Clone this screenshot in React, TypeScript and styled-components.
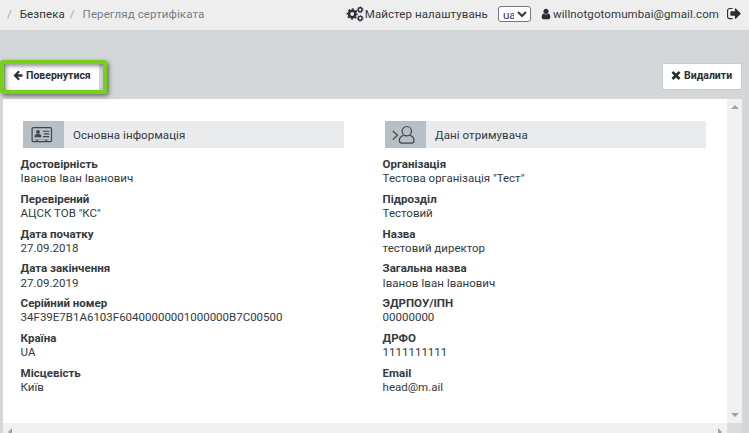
import React from "react";
import styled, { createGlobalStyle } from "styled-components";

const Global = createGlobalStyle`
  * { box-sizing: border-box; }
  body {
    margin: 0;
    overflow: hidden;
    background: #d3d7da;
    color: #343a40;
    font-family: Roboto, "Liberation Sans", sans-serif;
    font-size: 11.5px;
  }
`;

const Page = styled.div`
  width: 749px;
  height: 433px;
  display: flex;
  flex-direction: column;
  overflow: hidden;
`;

const TopBar = styled.header`
  height: 30px;
  flex: none;
  display: flex;
  align-items: center;
  justify-content: space-between;
  padding: 0 8px 3px 7px;
  background: #eee;
  white-space: nowrap;
`;

const Crumbs = styled.nav`
  display: flex;
  align-items: center;
`;

const Slash = styled.span`
  color: #a4abb1;
`;

const Crumb = styled.span<{ $muted?: boolean; $gap: number; $spacing: number }>`
  margin: 0 ${(p) => p.$gap}px 0 8px;
  color: ${(p) => (p.$muted ? "#737f88" : "#2f353a")};
  letter-spacing: ${(p) => p.$spacing}px;
`;

const Tools = styled.div`
  display: flex;
  align-items: center;
`;

const ToolText = styled.span<{ $spacing: number }>`
  margin-left: 1px;
  letter-spacing: ${(p) => p.$spacing}px;
`;

const Language = styled.select`
  width: 33px;
  height: 16px;
  margin: 0 9px 0 10px;
  padding: 0;
  border: 1px solid #767676;
  border-radius: 3px;
  background: #fff;
  color: #343a40;
  font: 11.5px Roboto, sans-serif;
`;

const Glyph = styled.svg<{ $gap?: number }>`
  flex: none;
  display: block;
  margin-left: ${(p) => p.$gap ?? 0}px;
`;

const Actions = styled.div`
  flex: none;
  display: flex;
  justify-content: space-between;
  height: 69px;
  padding: 33px 7px 0 5px;
`;

const ButtonHolder = styled.div`
  position: relative;
`;

const ActionButton = styled.button<{ $width: number; $outline: string }>`
  display: flex;
  align-items: center;
  width: ${(p) => p.$width}px;
  height: 27px;
  padding: 0 0 3px 7px;
  border: 1px solid ${(p) => p.$outline};
  background: #fff;
  color: #2b2f33;
  font: 700 10.5px Roboto, sans-serif;
  white-space: nowrap;
`;

const ActionText = styled.span`
  margin-left: 3px;
`;

const Highlight = styled.div`
  position: absolute;
  left: -5px;
  top: -3px;
  width: 107px;
  height: 34px;
  border: 4px solid #76d01c;
  border-radius: 3px;
  box-shadow: 2px 2px 4px rgba(0, 0, 0, 0.5), inset 2px 2px 4px rgba(0, 0, 0, 0.45);
`;

const Panel = styled.main`
  flex: 1;
  display: grid;
  grid-template-columns: 724px 15px;
  grid-template-rows: 324px 10px;
  margin-left: 3px;
  width: 739px;
`;

const Sheet = styled.section`
  display: flex;
  gap: 41px;
  padding: 22px 0 0 20px;
  background: #fff;
`;

const Track = styled.div<{ $vertical?: boolean }>`
  display: flex;
  flex-direction: ${(p) => (p.$vertical ? "column" : "row")};
  justify-content: space-between;
  align-items: ${(p) => (p.$vertical ? "center" : "flex-start")};
  padding: ${(p) => (p.$vertical ? "6px 0" : "5px 5px 0")};
  background: #f1f1f1;
`;

const Corner = styled.div`
  background: #dcdcdc;
`;

const Column = styled.div`
  width: 321px;
`;

const Heading = styled.h2`
  display: flex;
  align-items: center;
  height: 27px;
  margin: 0 0 9px;
  background: #e9ebec;
  font-size: 11.5px;
  font-weight: 400;
`;

const HeadingIcon = styled.span`
  display: flex;
  align-items: center;
  width: 41px;
  height: 27px;
  margin-right: 9px;
  padding-left: 7px;
  background: #b7c0c7;
`;

const HeadingText = styled.span`
  letter-spacing: 0.08px;
`;

const Fields = styled.dl`
  margin: 0 0 0 -2.4px;
`;

const Field = styled.div`
  height: 34.75px;
  line-height: 14.4px;
`;

const Label = styled.dt`
  font-weight: 700;
`;

const Value = styled.dd`
  margin: 0;
`;

const paths = {
  back: "M1664 896v128q0 53-32.5 90.5t-84.5 37.5h-704l293 294q38 36 38 90t-38 90l-75 76q-37 37-90 37-52 0-91-37l-651-652q-37-37-37-90 0-52 37-91l651-650q38-38 91-38 52 0 90 38l75 74q38 38 38 91t-38 91l-293 293h704q52 0 84.5 37.5t32.5 90.5z",
  remove: "M1490 1322q0 40-28 68l-136 136q-28 28-68 28t-68-28l-294-294-294 294q-28 28-68 28t-68-28l-136-136q-28-28-28-68t28-68l294-294-294-294q-28-28-28-68t28-68l136-136q28-28 68-28t68 28l294 294 294-294q28-28 68-28t68 28l136 136q28 28 28 68t-28 68l-294 294 294 294q28 28 28 68z",
  user: "M1536 1399q0 109-62.5 187t-150.5 78h-854q-88 0-150.5-78t-62.5-187q0-85 8.5-160.5t31.5-152 58.5-131 94-89 134.5-34.5q131 128 313 128t313-128q76 0 134.5 34.5t94 89 58.5 131 31.5 152 8.5 160.5zm-256-887q0 159-112.5 271.5t-271.5 112.5-271.5-112.5-112.5-271.5 112.5-271.5 271.5-112.5 271.5 112.5 112.5 271.5z",
  exit: "M704 1440q0 4 1 20t.5 26.5-3 23.5-10 19.5-20.5 6.5h-320q-119 0-203.5-84.5t-84.5-203.5v-704q0-119 84.5-203.5t203.5-84.5h320q13 0 22.5 9.5t9.5 22.5q0 4 1 20t.5 26.5-3 23.5-10 19.5-20.5 6.5h-320q-66 0-113 47t-47 113v704q0 66 47 113t113 47h312l11.5 1 11.5 3 8 5.5 7 9 2 13.5zm928-544q0 26-19 45l-544 544q-19 19-45 19t-45-19-19-45v-288h-448q-26 0-45-19t-19-45v-384q0-26 19-45t45-19h448v-288q0-26 19-45t45-19 45 19l544 544q19 19 19 45z",
};

function Gears() {
  return (
    <Glyph width="18" height="16" viewBox="0 0 18 16" fill="none" stroke="#2b2f33">
      <circle cx="6.2" cy="8" r="3.2" strokeWidth="2.6" />
      <circle cx="6.2" cy="8" r="4.9" strokeWidth="1.5" strokeDasharray="1.9 1.948" strokeDashoffset="0.95" />
      <circle cx="14.2" cy="3.7" r="1.9" strokeWidth="1.4" />
      <circle cx="14.2" cy="3.7" r="2.9" strokeWidth="0.9" strokeDasharray="1.3 1.3" />
      <circle cx="14.2" cy="12.3" r="1.9" strokeWidth="1.4" />
      <circle cx="14.2" cy="12.3" r="2.9" strokeWidth="0.9" strokeDasharray="1.3 1.3" />
    </Glyph>
  );
}

function CardIcon() {
  return (
    <Glyph width="23" height="17" viewBox="0 0 23 17" fill="none" stroke="#3f464c" $gap={0.5}>
      <rect x="1.1" y="1.6" width="19.4" height="14" rx="1.3" strokeWidth="1.2" />
      <circle cx="7" cy="5.9" r="1.9" fill="#3f464c" stroke="none" />
      <path d="M3.5 11.2c0-2.3 1.2-3 2.3-3.3h2.4c1.2.3 2.3 1 2.3 3.3z" fill="#3f464c" stroke="none" />
      <path d="M12 5.2h6.2M13 7.9h5.2M12 10.6h6.2" strokeWidth="1.1" />
      <path d="M3.5 13.5h14.5" strokeWidth=".5" opacity=".45" />
      <path d="M5.2 15.4v-1.2h1.6v1.2M14.5 15.4v-1.2h1.6v1.2" strokeWidth=".8" />
    </Glyph>
  );
}

function RecipientIcon() {
  return (
    <Glyph width="25" height="20" viewBox="0 0 25 20" fill="none" stroke="#3f464c" strokeWidth="1.2" $gap={0}>
      <path d="M.8 6l4.7 4.3-4.7 4.3" />
      <circle cx="14.8" cy="6.2" r="4.7" />
      <path d="M11.4 10.4c-2.5.8-4 2.8-4 5.2 0 1.800.8 2.600 2.600 2.600h9.400c1.800 0 2.600-.8 2.600-2.600 0-2.400-1.500-4.400-3.800-5.200" />
    </Glyph>
  );
}

type Entry = [string, string];

const certificate: Entry[] = [
  ["Достовірність", "Іванов Іван Іванович"],
  ["Перевірений", 'АЦСК ТОВ "КС"'],
  ["Дата початку", "27.09.2018"],
  ["Дата закінчення", "27.09.2019"],
  ["Серійний номер", "34F39E7B1A6103F60400000001000000B7C00500"],
  ["Країна", "UA"],
  ["Місцевість", "Київ"],
];

const recipient: Entry[] = [
  ["Організація", 'Тестова організація "Тест"'],
  ["Підрозділ", "Тестовий"],
  ["Назва", "тестовий директор"],
  ["Загальна назва", "Іванов Іван Іванович"],
  ["ЭДРПОУ/ІПН", "00000000"],
  ["ДРФО", "1111111111"],
  ["Email", "head@m.ail"],
];

function Info({ title, icon, entries }: { title: string; icon: React.ReactNode; entries: Entry[] }) {
  return (
    <Column>
      <Heading>
        <HeadingIcon>{icon}</HeadingIcon>
        <HeadingText>{title}</HeadingText>
      </Heading>
      <Fields>
        {entries.map(([label, value]) => (
          <Field key={label}>
            <Label>{label}</Label>
            <Value>{value}</Value>
          </Field>
        ))}
      </Fields>
    </Column>
  );
}

export default function App() {
  return (
    <Page>
      <Global />
      <TopBar>
        <Crumbs>
          <Slash>/</Slash>
          <Crumb $gap={5} $spacing={0.1}>Безпека</Crumb>
          <Slash>/</Slash>
          <Crumb $muted $gap={0} $spacing={0.1}>Перегляд сертифіката</Crumb>
        </Crumbs>
        <Tools>
          <Gears />
          <ToolText $spacing={0.1}>Майстер налаштувань</ToolText>
          <Language defaultValue="ua">
            <option value="ua">ua</option>
          </Language>
          <Glyph width="12" height="12" viewBox="128 0 1536 1792" fill="#2b2f33">
            <path d={paths.user} />
          </Glyph>
          <ToolText $spacing={0.1}>willnotgotomumbai@gmail.com</ToolText>
          <Glyph width="14" height="15" viewBox="60 90 1600 1600" fill="#2b2f33" $gap={8}>
            <path d={paths.exit} />
          </Glyph>
        </Tools>
      </TopBar>
      <Actions>
        <ButtonHolder>
          <ActionButton $width={94} $outline="#fff">
            <Glyph width="10" height="11" viewBox="64 128 1664 1664" fill="currentColor">
              <path d={paths.back} />
            </Glyph>
            <ActionText>Повернутися</ActionText>
          </ActionButton>
          <Highlight />
        </ButtonHolder>
        <ActionButton $width={80} $outline="#c9cccf">
          <Glyph width="10" height="10" viewBox="200 200 1392 1392" fill="currentColor" $gap={1}>
            <path d={paths.remove} />
          </Glyph>
          <ActionText>Видалити</ActionText>
        </ActionButton>
      </Actions>
      <Panel>
        <Sheet>
          <Info title="Основна інформація" icon={<CardIcon />} entries={certificate} />
          <Info title="Дані отримувача" icon={<RecipientIcon />} entries={recipient} />
        </Sheet>
        <Track $vertical>
          <Glyph width="8" height="4" viewBox="0 0 8 4" fill="#a3a3a3"><path d="M0 4l4-4 4 4z" /></Glyph>
          <Glyph width="8" height="4" viewBox="0 0 8 4" fill="#a3a3a3"><path d="M0 0l4 4 4-4z" /></Glyph>
        </Track>
        <Track>
          <Glyph width="4" height="8" viewBox="0 0 4 8" fill="#a3a3a3"><path d="M4 0L0 4l4 4z" /></Glyph>
          <Glyph width="4" height="8" viewBox="0 0 4 8" fill="#a3a3a3"><path d="M0 0l4 4-4 4z" /></Glyph>
        </Track>
        <Corner />
      </Panel>
    </Page>
  );
}
